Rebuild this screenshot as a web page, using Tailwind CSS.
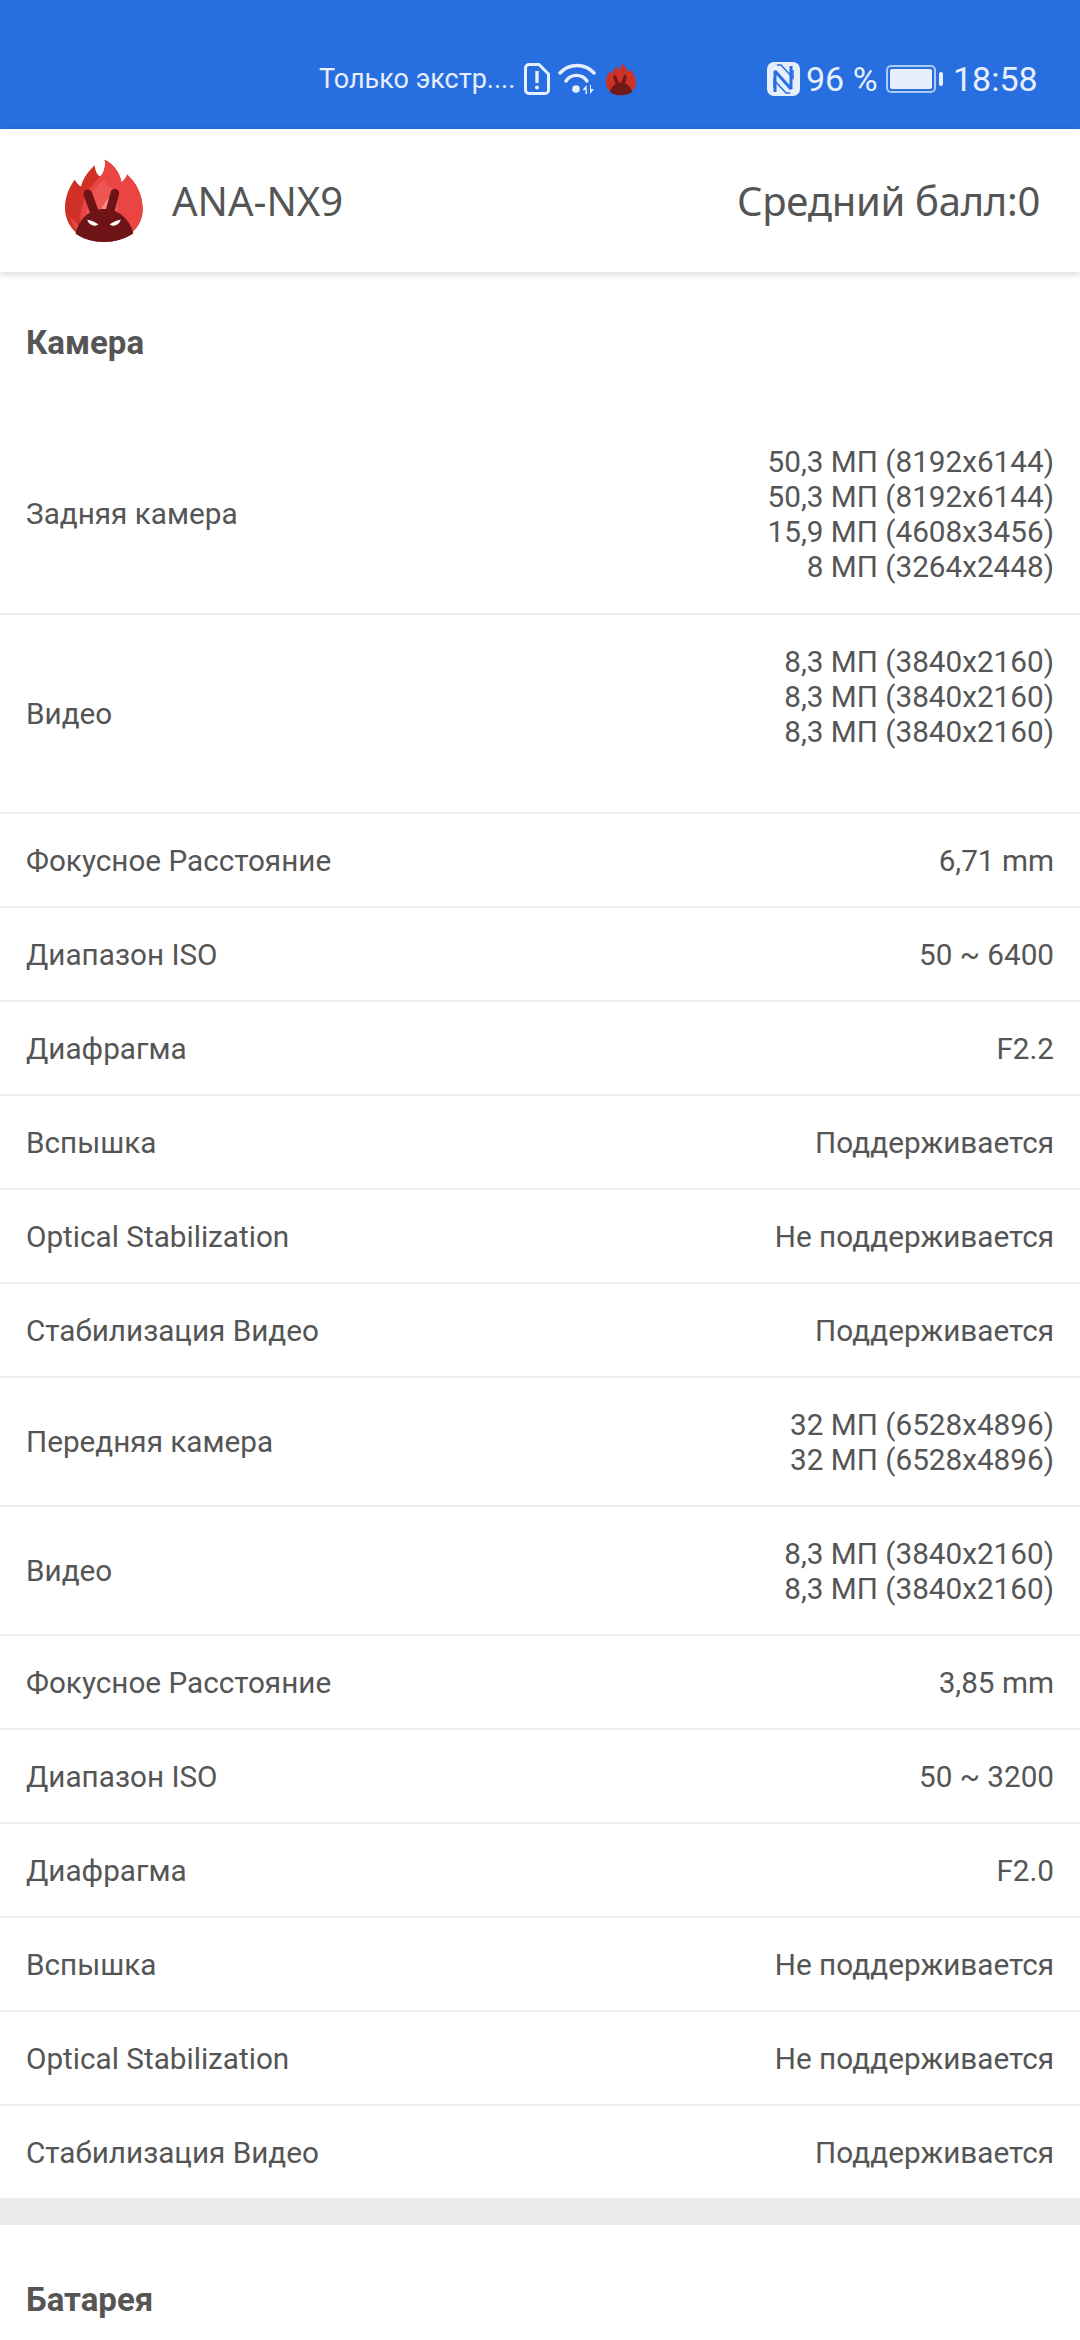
<!DOCTYPE html>
<html lang="en">

<head>
    <meta charset="UTF-8">
    <meta name="viewport" content="width=device-width, initial-scale=1.0">
    <title>ANA-NX9</title>
    <script src="https://cdn.jsdelivr.net/npm/@tailwindcss/browser@4"></script>
</head>

<body class="w-[1080px] h-[2340px] overflow-hidden bg-white font-['Roboto',sans-serif] text-[#555555]">
    <!-- status bar -->
    <header class="h-[129px] bg-[#276ee0] pt-[62px] pl-[319px] pr-[45px] flex items-start justify-between text-[#e8effc]">
        <div class="flex items-center h-[34px]">
            <span class="w-[198px] text-[27px] leading-[34px] whitespace-nowrap">Только экстр....</span>
            <svg class="ml-[7px] w-[26px] h-[32px]" viewBox="0 0 26 32" fill="none">
                <path d="M5 1.500h10l9.500 9.500v16a3.500 3.500 0 0 1-3.500 3.500H5A3.500 3.500 0 0 1 1.500 27V5A3.500 3.500 0 0 1 5 1.500z" stroke="#e8effc" stroke-width="3" />
                <path d="M13 8v12" stroke="#e8effc" stroke-width="3.400" />
                <circle cx="13" cy="24.500" r="2" fill="#e8effc" />
            </svg>
            <svg class="ml-[8px] w-[38px] h-[32px]" viewBox="0 0 38 32" fill="none" stroke="#e8effc" stroke-linecap="round">
                <path d="M2 10C11 0 27 0 36 10" stroke-width="3.400" />
                <path d="M8 18C13 10.500 24 10.500 29 18" stroke-width="3.400" />
                <circle cx="18" cy="26" r="3.800" fill="#e8effc" stroke="none" />
                <path d="M28.500 22l-4 5h3v4h1.500zM32 31l4-5h-3v-4h-1z" fill="#e8effc" stroke="none" />
            </svg>
            <svg class="ml-[10px] w-[30px] h-[33px]" viewBox="47 38 232 246">
                <path d="M163 283C95 283 47 240 47 182C47 150 58 122 76 98C82 108 88 115 95 118C100 95 115 75 135 55C137 70 142 85 152 88C165 75 168 55 165 38C190 50 210 75 215 105C222 100 230 90 232 82C262 110 278 145 278 187C278 240 230 283 163 283Z" fill="#cf3124" />
                <path d="M115 140L135 195M195 138L180 195" stroke="#701a18" stroke-width="26" stroke-linecap="round" />
                <path d="M78 258C88 215 120 185 163 185C205 185 240 215 250 258C225 275 195 283 163 283C130 283 100 275 78 258Z" fill="#701a18" />
            </svg>
        </div>
        <div class="flex items-center h-[34px]">
            <svg class="w-[33px] h-[34px]" viewBox="0 0 33 34">
                <rect x="0" y="0" width="33" height="34" rx="7" fill="#e8effc" />
                <path d="M8 30V9L24 27V4" fill="none" stroke="#276ee0" stroke-width="3" stroke-linejoin="bevel" />
                <path d="M10 3h4l12 13v-8M23 31h-4L7 18v8" fill="none" stroke="#276ee0" stroke-width="1.500" />
            </svg>
            <span class="ml-[6px] w-[73px] text-[34px] leading-[34px] whitespace-nowrap">96 %</span>
            <div class="ml-[7px] w-[50px] h-[28px] rounded-[5px] border-[2px] border-[#e8effc]/70 p-[2px]">
                <div class="w-full h-full rounded-[2px] bg-[#e8effc]"></div>
            </div>
            <div class="ml-[3px] w-[4px] h-[14px] rounded-[2px] bg-[#e8effc]"></div>
            <span class="ml-[10px] w-[82px] text-[34px] leading-[34px] whitespace-nowrap">18:58</span>
        </div>
    </header>

    <!-- app header -->
    <section class="relative h-[143px] bg-white shadow-[0_2px_7px_rgba(0,0,0,0.16)] pl-[65px] pr-[40px] flex items-center justify-between font-['Noto_Sans',sans-serif] text-[40px]">
        <div class="flex items-center">
            <svg class="w-[78px] h-[86px]" viewBox="47 38 232 246">
                <path d="M163 283C95 283 47 240 47 182C47 150 58 122 76 98C82 108 88 115 95 118C100 95 115 75 135 55C137 70 142 85 152 88C165 75 168 55 165 38C190 50 210 75 215 105C222 100 230 90 232 82C262 110 278 145 278 187C278 240 230 283 163 283Z" fill="#d13026" />
                <path d="M163 283C115 283 70 255 62 205C75 225 88 232 95 235C88 190 105 130 152 88C165 75 168 55 165 38C190 50 210 75 215 105C222 100 230 90 232 82C262 110 278 145 278 187C278 240 230 283 163 283Z" fill="#ea4542" />
                <path d="M110 235C105 180 125 130 160 98C178 120 205 125 205 170C205 205 195 225 180 240Z" fill="#ef5552" />
                <path d="M150 190L176 152L196 190Z" fill="#f58f88" />
                <path d="M115 140L135 195M195 138L180 195" stroke="#6f1416" stroke-width="26" stroke-linecap="round" />
                <path d="M78 258C88 215 120 185 163 185C205 185 240 215 250 258C225 275 195 283 163 283C130 283 100 275 78 258Z" fill="#6f1416" />
                <path d="M113 217C122 218 137 224 146 230C138 238 120 236 113 217ZM213 217C204 218 189 224 180 230C188 238 206 236 213 217Z" fill="#fff" />
            </svg>
            <span class="ml-[29px]">ANA-NX9</span>
        </div>
        <span class="tracking-[-0.3px]">Средний балл:0</span>
    </section>

    <!-- Камера -->
    <main class="text-[29.7px] leading-[35px]">
        <h2 class="h-[142px] pt-[53px] px-[26px] font-bold text-[33px]">Камера</h2>

        <div class="flex justify-between items-center h-[199px] px-[26px]">
            <span>Задняя камера</span>
            <span class="text-right">50,3 МП (8192x6144)<br>50,3 МП (8192x6144)<br>15,9 МП (4608x3456)<br>8 МП (3264x2448)</span>
        </div>
        <div class="flex justify-between items-center h-[199px] px-[26px] border-t-2 border-[#eeeeee]">
            <span>Видео</span>
            <span class="text-right pb-[35px]">8,3 МП (3840x2160)<br>8,3 МП (3840x2160)<br>8,3 МП (3840x2160)</span>
        </div>
        <div class="flex justify-between items-center h-[94px] px-[26px] border-t-2 border-[#eeeeee]"><span>Фокусное Расстояние</span><span>6,71 mm</span></div>
        <div class="flex justify-between items-center h-[94px] px-[26px] border-t-2 border-[#eeeeee]"><span>Диапазон ISO</span><span>50 ~ 6400</span></div>
        <div class="flex justify-between items-center h-[94px] px-[26px] border-t-2 border-[#eeeeee]"><span>Диафрагма</span><span>F2.2</span></div>
        <div class="flex justify-between items-center h-[94px] px-[26px] border-t-2 border-[#eeeeee]"><span>Вспышка</span><span>Поддерживается</span></div>
        <div class="flex justify-between items-center h-[94px] px-[26px] border-t-2 border-[#eeeeee]"><span>Optical Stabilization</span><span>Не поддерживается</span></div>
        <div class="flex justify-between items-center h-[94px] px-[26px] border-t-2 border-[#eeeeee]"><span>Стабилизация Видео</span><span>Поддерживается</span></div>
        <div class="flex justify-between items-center h-[129px] px-[26px] border-t-2 border-[#eeeeee]">
            <span>Передняя камера</span>
            <span class="text-right">32 МП (6528x4896)<br>32 МП (6528x4896)</span>
        </div>
        <div class="flex justify-between items-center h-[129px] px-[26px] border-t-2 border-[#eeeeee]">
            <span>Видео</span>
            <span class="text-right">8,3 МП (3840x2160)<br>8,3 МП (3840x2160)</span>
        </div>
        <div class="flex justify-between items-center h-[94px] px-[26px] border-t-2 border-[#eeeeee]"><span>Фокусное Расстояние</span><span>3,85 mm</span></div>
        <div class="flex justify-between items-center h-[94px] px-[26px] border-t-2 border-[#eeeeee]"><span>Диапазон ISO</span><span>50 ~ 3200</span></div>
        <div class="flex justify-between items-center h-[94px] px-[26px] border-t-2 border-[#eeeeee]"><span>Диафрагма</span><span>F2.0</span></div>
        <div class="flex justify-between items-center h-[94px] px-[26px] border-t-2 border-[#eeeeee]"><span>Вспышка</span><span>Не поддерживается</span></div>
        <div class="flex justify-between items-center h-[94px] px-[26px] border-t-2 border-[#eeeeee]"><span>Optical Stabilization</span><span>Не поддерживается</span></div>
        <div class="flex justify-between items-center h-[94px] px-[26px] border-t-2 border-[#eeeeee]"><span>Стабилизация Видео</span><span>Поддерживается</span></div>

        <div class="h-[27px] bg-[#ebebeb]"></div>
        <h2 class="pt-[57px] px-[26px] font-bold text-[33px]">Батарея</h2>
    </main>
</body>

</html>
